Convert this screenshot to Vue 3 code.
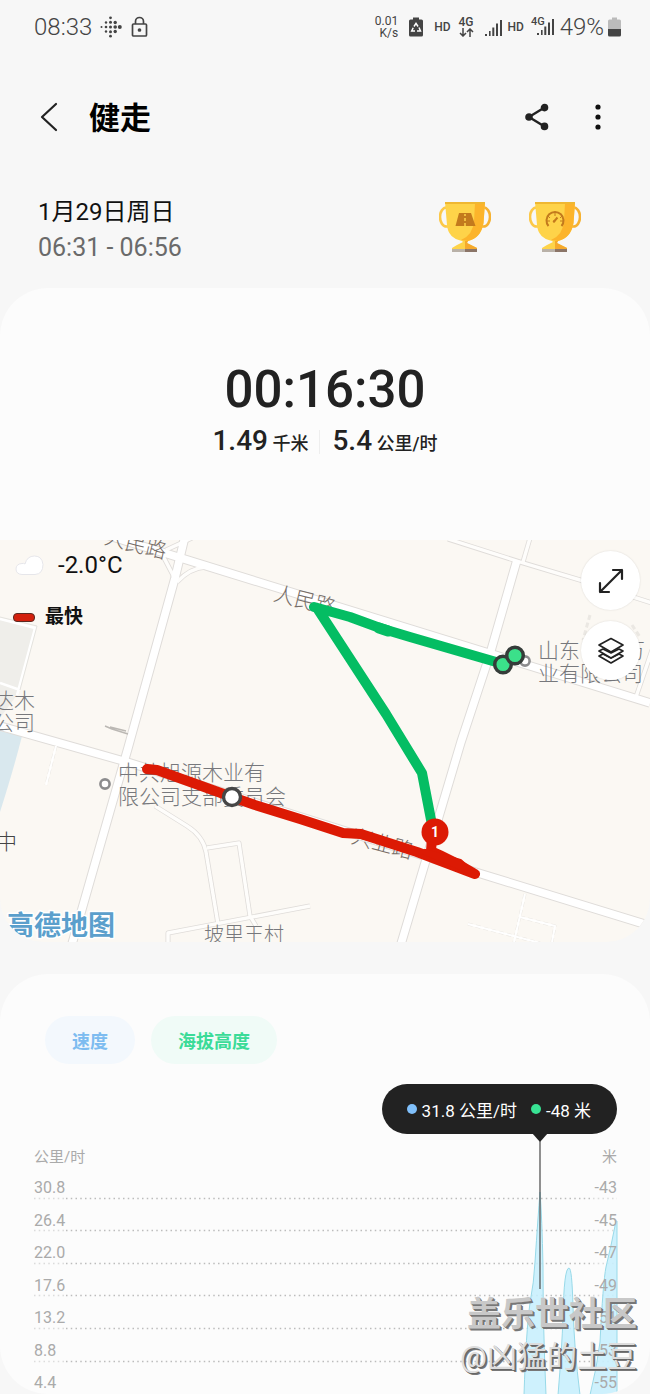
<script setup>
import { ref } from 'vue'

const rows = [
  ['30.8', '-43'],
  ['26.4', '-45'],
  ['22.0', '-47'],
  ['17.6', '-49'],
  ['13.2', '-51'],
  ['8.8', '-53'],
  ['4.4', '-55'],
]
const gridLines = rows.slice(0, -1).map((_, i) => Math.round((i + 1) * 32.6) - 1)
const showSpeed = ref(true)
const showAltitude = ref(true)

const wideRoads = [
  'M100 -7 L650 163',
  'M187 -12 L175 38 L128 208 L72 404',
  'M0 186 L127 222 L475 332 L654 387',
  'M517 20 L490 114 L461 202 L401 404',
]
const thinRoads = [
  'M448 -1 L520 22 L580 40 L652 63',
  'M530 -2 L523 22',
  'M636 157 L652 110',
  'M162 14 L174 37 M206 27 Q190 28 177 42 M166 10 L192 -2',
  'M155 266 L187 286 Q203 296 206 312 L218 384',
  'M207 308 L239 303 L250 376 L256 386',
  'M168 404 L168 393 L310 366',
]
</script>

<template>
  <div class="page">
    <header class="status">
      <span class="clock">08:33</span>
      <svg class="fit" width="22" height="22" viewBox="0 0 22 22" fill="#444" aria-hidden="true">
        <circle cx="1.500" cy="11" r="1" /><circle cx="6" cy="6.500" r="1.200" /><circle cx="6" cy="11" r="1.300" /><circle cx="6" cy="15.500" r="1.200" />
        <circle cx="10.500" cy="1.800" r="1.400" /><circle cx="10.500" cy="6.300" r="1.500" /><circle cx="10.500" cy="11" r="1.500" /><circle cx="10.500" cy="15.700" r="1.500" /><circle cx="10.500" cy="20.200" r="1.400" />
        <circle cx="15.200" cy="6.500" r="1.700" /><circle cx="15.200" cy="11" r="1.800" /><circle cx="15.200" cy="15.500" r="1.700" /><circle cx="19.800" cy="11" r="2" />
      </svg>
      <svg class="lock" width="18" height="22" viewBox="0 0 18 22" fill="none" stroke="#444" stroke-width="1.700" aria-hidden="true">
        <rect x="1.500" y="8" width="14" height="12" rx="1" /><path d="M4.500 8V5.500a4 4 0 0 1 8 0V8" /><circle cx="8.500" cy="14" r="1" fill="#444" />
      </svg>
      <div class="status-right">
        <span class="rate">0.01<br />K/s</span>
        <svg class="recycle" width="14" height="20" viewBox="0 0 14 20" aria-hidden="true">
          <path d="M4 0.500h6v2h2.500q1.500 0 1.500 1.500v14q0 1.500-1.500 1.500h-11Q0 19.500 0 18V4q0-1.500 1.500-1.500H4z" fill="#444" />
          <path d="M5 9.500 7 6.300l2 3.200M10 10.500l1.500 3.500H8M6 14H2.700L4.200 10.800" fill="none" stroke="#fff" stroke-width="1.500" />
        </svg>
        <span class="hd">HD</span>
        <span class="net">
          4G
          <svg width="15" height="9" viewBox="0 0 15 9" fill="none" stroke="#444" stroke-width="1.500" aria-hidden="true"><path d="M4 0v8M1 5l3 3 3-3M11 9V1M8 4l3-3 3 3" /></svg>
        </span>
        <svg class="signal" width="17" height="17" viewBox="0 0 17 17" fill="#444" aria-hidden="true"><path d="M0 15h2v2H0zM4 12h1.600v5H4zM7.300 8.500h2V17h-2zM11 4.500h2V17h-2zM15 1h2v16h-2z" /></svg>
        <span class="hd hd-two">HD</span>
        <span class="sim">
          <span class="sim-net">4G</span>
          <svg width="17" height="17" viewBox="0 0 17 17" fill="#444" aria-hidden="true"><path d="M0 15h2v2H0zM4 12h1.600v5H4zM7.300 8.500h2V17h-2zM11 4.500h2V17h-2zM15 1h2v16h-2z" /></svg>
        </span>
        <span class="percent">49%</span>
        <svg width="14" height="20" viewBox="0 0 14 20" aria-hidden="true">
          <path d="M4 0.500h5v2h2.500q1.500 0 1.500 1.500v8H0V4q0-1.500 1.500-1.500H4z" fill="#bbb" /><path d="M0 12h13v6q0 1.500-1.500 1.500h-10Q0 19.500 0 18z" fill="#444" />
        </svg>
      </div>
    </header>

    <nav class="appbar">
      <button type="button" class="icon-btn" aria-label="返回">
        <svg width="18" height="30" viewBox="0 0 18 30" fill="none" stroke="#222" stroke-width="2.200" stroke-linecap="round" stroke-linejoin="round"><path d="M16 2 2 15l14 13" /></svg>
      </button>
      <h1>健走</h1>
      <button type="button" class="icon-btn share" aria-label="分享">
        <svg width="24" height="28" viewBox="0 0 24 28" fill="#222" stroke="#222" stroke-width="2.400"><path d="M19.500 4.500 4 14l15.500 9.500" fill="none" /><circle cx="19.500" cy="4.600" r="2.600" /><circle cx="4" cy="14" r="2.600" /><circle cx="19.500" cy="23.400" r="2.600" /></svg>
      </button>
      <button type="button" class="icon-btn" aria-label="更多">
        <svg width="8" height="28" viewBox="0 0 8 28" fill="#111"><circle cx="4" cy="4" r="2.600" /><circle cx="4" cy="14" r="2.600" /><circle cx="4" cy="24" r="2.600" /></svg>
      </button>
    </nav>

    <section class="session">
      <div>
        <p class="date">1月29日周日</p>
        <p class="period">06:31 - 06:56</p>
      </div>
      <div class="trophies">
        <svg v-for="kind in ['road', 'speed']" :key="kind" width="52" height="52" viewBox="0 0 52 52" aria-hidden="true">
          <ellipse cx="7.500" cy="16" rx="6.500" ry="9.500" fill="none" stroke="#fcc848" stroke-width="2.600" />
          <ellipse cx="44.500" cy="16" rx="6.500" ry="9.500" fill="none" stroke="#f6b232" stroke-width="2.600" />
          <path d="M6 1H46L44.500 22Q42 37 29 40L28 42L34 45L38 47V50H13V47L18 44L24 41L23 40Q9 37 8 24z" fill="#fed349" />
          <path d="M36 2H46L44.500 22Q42 37 29 40L22 39Q34 34 35 20z" fill="#fcb42b" />
          <path d="M26 40H29L28 42L34 45L38 47V50H26z" fill="#f5a92c" />
          <path d="M6 1H46V3H6z" fill="#efb732" />
          <path d="M13 48H26V51H13z" fill="#b9b1a8" /><path d="M26 48H38V51H26z" fill="#8b7568" />
          <g v-if="kind === 'road'"><path d="M20 12H32L36.500 25H16.500z" fill="#c37a1d" /><path d="M26 13v2M26 17v3M26 22v3" stroke="#fed349" stroke-width="1.500" /></g>
          <g v-else fill="none" stroke="#c37a1d" stroke-width="2"><path d="M19.500 25A8.500 8.500 0 1 1 32.500 25M25 20.500 28.500 16.500" /><path d="M26 12v3M19 15l2 2M33 15l-2 2M18 20h3M34 20h-3" stroke-width="1" /><circle cx="25" cy="20.500" r="1.200" fill="#c37a1d" stroke="none" /></g>
        </svg>
      </div>
    </section>

    <section class="card summary">
      <div class="duration">00:16:30</div>
      <div class="metrics">
        <span><b>1.49</b> 千米</span>
        <span><b>5.4</b> 公里/时</span>
      </div>
    </section>

    <section class="map">
      <svg class="canvas" viewBox="0 0 650 402" role="img" aria-label="高德地图">
        <rect width="650" height="402" fill="#fbf8f3" />
        <path d="M0 79 35 88 17 155 0 178z" fill="#efeeea" />
        <path d="M0 79 35 88 17 155M0 143 20 150" fill="none" stroke="#fff" stroke-width="2.500" />
        <path d="M0 77 37 86 20 150" fill="none" stroke="#e3e2de" />
        <path d="M0 191 22 196Q14 228 0 272z" fill="#d9e8ee" />
        <g fill="none" stroke-linejoin="round">
          <path v-for="d in thinRoads" :key="d" :d="d" stroke="#dfdcd9" stroke-width="5" />
          <path v-for="d in wideRoads" :key="d" :d="d" stroke="#dfdcd9" stroke-width="9.500" />
          <path v-for="d in thinRoads" :key="d + 'i'" :d="d" stroke="#fefdfb" stroke-width="3.400" />
          <path v-for="d in wideRoads" :key="d + 'i'" :d="d" stroke="#fff" stroke-width="7.500" />
          <path d="M525 354 514 402M468 384 540 403M520 377 555 386 552 402M56 206 46 245M590 75 583 100M632 85l8 12" stroke="#ebe8e3" stroke-width="3" stroke-dasharray="5 3" />
          <path d="M525 354 514 402M468 384 540 403M520 377 555 386 552 402M56 206 46 245" stroke="#fff" stroke-width="2" />
          <path d="M105 186 112 189 128 194M110 187 126 191" stroke="#bbb8b4" stroke-width="1.500" />
        </g>
        <g class="place">
          <g transform="rotate(14 134 5)"><text x="104" y="11" class="road">人民路</text></g>
          <g transform="rotate(14 305 62)"><text x="273" y="68" class="road">人民路</text></g>
          <g transform="rotate(15 382 304)"><text x="351" y="311" class="road">兴业路</text></g>
          <text x="-7" y="168">达木</text>
          <text x="-7" y="190">公司</text>
          <text x="-4" y="309" class="dark">中</text>
          <text x="118" y="240">中共旭源木业有</text>
          <text x="118" y="264">限公司支部委员会</text>
          <text x="538" y="118">山东</text>
          <text x="624" y="118">万</text>
          <text x="538" y="141">业有限公司</text>
          <text x="204" y="402" class="village">坡里王村</text>
        </g>
        <text x="7" y="395" class="brand">高德地图</text>
        <g fill="#fff" stroke="#8c8c8e" stroke-width="2.600"><circle cx="105" cy="244" r="4.600" /><circle cx="525" cy="121" r="4.600" /></g>
        <g fill="none" stroke-width="10" stroke-linecap="round" stroke-linejoin="round">
          <path d="M503 124 410 97 380 88 350 77 314 67M317 68 386 174 422 233 433 290" stroke="#04bd63" />
          <path d="M379 88 388 91" stroke="#04bd63" stroke-width="11" />
          <path d="M147 229 157 230 232 257 255 265 300 279 343 293 361 294 417 312 475 334Q452 320 431 311L432 298" stroke="#dc1a04" />
          <path d="M425 312 460 322 470 331z" fill="#dc1a04" stroke="#dc1a04" stroke-width="6" />
        </g>
        <circle cx="232" cy="257" r="8.500" fill="#fff" stroke="#464646" stroke-width="3.400" />
        <g fill="#3be08a" stroke="#353c39" stroke-width="3.500"><circle cx="503" cy="124.500" r="8.300" /><circle cx="515" cy="115.500" r="8.300" /></g>
        <circle cx="435" cy="292" r="13.500" fill="#dc1a04" />
        <text x="435" y="297" class="pin">1</text>
      </svg>
      <div class="map-info">
        <div class="weather">
          <svg width="30" height="22" viewBox="0 0 30 22" aria-hidden="true"><path d="M7 20.500Q1 20 1 15T7 9.500Q9 9 10 10Q12 2 19.500 2T28 10.500Q28 20 20 20.500z" fill="#fff" stroke="#e6e6ea" /></svg>
          <span>-2.0°C</span>
        </div>
        <div class="legend"><i></i><span>最快</span></div>
      </div>
      <div class="map-tools">
        <button type="button" aria-label="全屏">
          <svg width="28" height="28" viewBox="0 0 28 28" fill="none" stroke="#222" stroke-width="2.200" stroke-linecap="round" stroke-linejoin="round"><path d="M3 25 25 3M16 3h9v9M3 16v9h9" /></svg>
        </button>
        <button type="button" aria-label="图层">
          <svg width="28" height="28" viewBox="0 0 28 28" fill="#fff" stroke="#222" stroke-width="1.700" stroke-linejoin="round"><path d="m2 19 12 7 12-7-4-2-8 4-8-4z" /><path d="m2 14 12 7 12-7-4-2-8 4-8-4z" /><path d="M14 1.500 26 8 14 15 2 8z" /></svg>
        </button>
      </div>
    </section>

    <section class="card chart-card">
      <div class="chips">
        <button type="button" class="chip speed" :aria-pressed="showSpeed" @click="showSpeed = !showSpeed">速度</button>
        <button type="button" class="chip altitude" :aria-pressed="showAltitude" @click="showAltitude = !showAltitude">海拔高度</button>
      </div>
      <div class="tooltip"><i class="dot blue"></i>31.8 公里/时<i class="dot green"></i>-48 米</div>
      <div class="axis-titles"><span>公里/时</span><span>米</span></div>
      <div class="plot">
        <svg viewBox="0 0 583 227" preserveAspectRatio="none" aria-hidden="true">
          <g stroke="#bcbcbc" stroke-width="1.300" stroke-dasharray="1.500 3.250">
            <template v-for="y in gridLines" :key="y">
              <path :d="`M0 ${y - 0.5}H31`" opacity="0.500" /><path :d="`M32 ${y - 0.5}H558`" /><path :d="`M559 ${y - 0.5}H583`" opacity="0.500" />
            </template>
          </g>
          <g v-if="showSpeed" fill="#c5eefd" fill-opacity="0.850" stroke="#98d9e8" stroke-width="1">
            <path d="M490 228Q492 165 496 136Q500 115 501 95Q504 50 506 25Q508 50 509 100Q509 160 512 228" />
            <path d="M524 228Q528 180 529 150Q530 101 535 101Q538 101 539 140Q540 180 546 228" />
            <path d="M556 228Q563 200 566 175Q569 115 572 100Q578 75 582 54L583 54V228" />
          </g>
          <path d="M506 -26V122" stroke="#555" stroke-width="1.300" />
        </svg>
        <div v-for="r in rows" :key="r[0]" class="row"><span>{{ r[0] }}</span><span>{{ r[1] }}</span></div>
      </div>
    </section>

    <div class="watermark"><strong>盖乐世社区</strong><span>@凶猛的土豆</span></div>
  </div>
</template>

<style>
body {
  background: #f7f7f7;
}
</style>

<style scoped>
.page {
  position: relative;
  overflow: hidden;
  background: #f7f7f7;
  color: #222;
  font-family: Roboto, "Noto Sans CJK SC", sans-serif;
}
svg {
  display: block;
  flex: none;
}
button {
  border: 0;
  padding: 0;
  background: none;
  font: inherit;
  color: inherit;
}
p,
h1 {
  margin: 0;
}
.status {
  display: flex;
  align-items: center;
  height: 53px;
  padding: 0 28px 0 34px;
  color: #444;
}
.clock {
  font-size: 24px;
  font-weight: 300;
}
.fit {
  margin-left: 8px;
}
.lock {
  margin-left: 9px;
}
.status-right {
  display: flex;
  align-items: center;
  margin-left: auto;
}
.rate {
  font-size: 12px;
  line-height: 12px;
  text-align: right;
}
.recycle {
  margin-left: 11px;
}
.hd {
  margin-left: 11px;
  font-size: 12px;
  font-weight: 500;
}
.net {
  display: flex;
  flex-direction: column;
  align-items: center;
  margin-left: 8px;
  font-size: 12px;
  font-weight: 500;
  line-height: 12px;
}
.signal {
  margin: 2px 0 0 11px;
}
.hd-two {
  margin-left: 6px;
}
.sim {
  display: flex;
  align-items: flex-end;
  margin-left: 7px;
}
.sim-net {
  align-self: flex-start;
  margin: -2px -8px 0 0;
  font-size: 11px;
  font-weight: 500;
  line-height: 12px;
}
.percent {
  margin: 0 4px 0 6px;
  font-size: 24px;
  font-weight: 300;
}
.appbar {
  display: flex;
  align-items: center;
  height: 127px;
  padding: 0 48px 0 40px;
}
h1 {
  margin-left: 31px;
  padding-top: 4px;
  font-size: 31px;
  font-weight: 700;
  line-height: 40px;
  color: #000;
}
.share {
  margin: 0 45px 0 auto;
}
.session {
  display: flex;
  justify-content: space-between;
  box-sizing: border-box;
  height: 108px;
  padding: 14px 69px 0 38px;
  font-size: 25px;
  line-height: 36px;
}
.date {
  font-size: 24px;
  color: #111;
}
.period {
  color: #6a6a6a;
}
.trophies {
  display: flex;
  gap: 38px;
  padding-top: 7px;
}
.card {
  background: #fcfcfc;
}
.summary {
  padding: 72px 0 76px;
  border-radius: 48px 48px 0 0;
  text-align: center;
}
.summary .duration {
  font-size: 51px;
  font-weight: 500;
  line-height: 60px;
}
.metrics {
  display: flex;
  justify-content: center;
  height: 44px;
  font-size: 18px;
  font-weight: 500;
  line-height: 42px;
}
.metrics b {
  font-size: 28px;
  font-weight: 500;
}
.metrics span + span {
  margin-left: 11px;
  padding-left: 13px;
  background: linear-gradient(#eee, #eee) left center / 1px 24px no-repeat;
}
.map {
  position: relative;
  overflow: hidden;
  border-radius: 0 0 44px 44px;
}
.canvas {
  width: 100%;
  height: auto;
}
.place {
  font-size: 21px;
  font-weight: 300;
  fill: #77787c;
}
.place .road {
  fill: #776e68;
}
.place .dark {
  fill: #444;
}
.place .village {
  font-size: 20px;
}
.brand {
  font-size: 27px;
  font-weight: 700;
  fill: #5b9fcc;
  stroke: #fff;
  stroke-width: 3px;
  stroke-linejoin: round;
  paint-order: stroke;
}
.pin {
  font-size: 14px;
  font-weight: 700;
  fill: #fff;
  text-anchor: middle;
}
.map-info {
  position: absolute;
  top: 10px;
  left: 13px;
  color: #111;
}
.weather {
  display: flex;
  align-items: center;
  gap: 13px;
  padding-left: 2px;
  font-size: 24px;
  line-height: 30px;
}
.legend {
  display: flex;
  align-items: center;
  gap: 10px;
  margin-top: 22px;
  font-size: 19px;
  font-weight: 700;
  line-height: 30px;
}
.legend i {
  box-sizing: border-box;
  width: 22px;
  height: 9px;
  border: 1px solid #5c2a22;
  border-radius: 4px;
  background: #d3200d;
}
.map-tools {
  position: absolute;
  top: 11px;
  right: 10px;
  display: grid;
  gap: 11px;
}
.map-tools button {
  display: grid;
  place-items: center;
  width: 59px;
  height: 59px;
  border-radius: 50%;
  background: #fff;
  box-shadow: 0 0 2px #0002;
}
.chart-card {
  margin-top: 32px;
  padding: 42px 33px 0 34px;
  border-radius: 48px;
  overflow: hidden;
}
.chips {
  display: flex;
  gap: 16px;
  padding-left: 11px;
}
.chip {
  height: 48px;
  padding: 0 27px;
  border-radius: 24px;
  font-size: 18px;
  font-weight: 700;
}
.speed {
  background: #f3f8fd;
  color: #7dbcf0;
}
.altitude {
  background: #f0fbf7;
  color: #3bdb98;
}
.tooltip {
  position: relative;
  display: flex;
  align-items: center;
  width: max-content;
  height: 50px;
  margin: 20px 0 0 auto;
  padding: 0 26px 0 25px;
  box-sizing: border-box;
  border-radius: 25px;
  background: #222;
  color: #fff;
  font-size: 17px;
}
.tooltip::after {
  content: "";
  position: absolute;
  top: 49px;
  right: 69px;
  border: 8px solid transparent;
  border-top: 9px solid #222;
  border-bottom: 0;
}
.dot {
  width: 10px;
  height: 10px;
  margin-right: 5px;
  border-radius: 50%;
}
.blue {
  background: #80c0fb;
}
.green {
  margin-left: 14px;
  background: #38e394;
}
.axis-titles {
  display: flex;
  justify-content: space-between;
  margin-top: 13px;
  color: #aaa;
  font-size: 15px;
  line-height: 20px;
}
.plot {
  position: relative;
  z-index: 0;
  display: grid;
  grid-template-rows: repeat(7, 1fr);
  height: 227px;
}
.plot svg {
  position: absolute;
  z-index: -1;
  inset: 0;
  width: 100%;
  height: 100%;
  overflow: visible;
}
.row {
  display: flex;
  justify-content: space-between;
  align-items: flex-end;
  color: #aaa;
  font-size: 16px;
  line-height: 22px;
}
.watermark {
  position: absolute;
  right: 13px;
  bottom: 16px;
  display: flex;
  flex-direction: column;
  align-items: flex-end;
  color: #c8c8c8;
  text-shadow: 1px 1px #777, 2px 2px #777;
}
.watermark strong {
  font-size: 34px;
  line-height: 44px;
}
.watermark span {
  color: #ddd;
  font-size: 30px;
  line-height: 42px;
  text-shadow: 1px 1px #666, 2px 2px #777;
}
</style>
